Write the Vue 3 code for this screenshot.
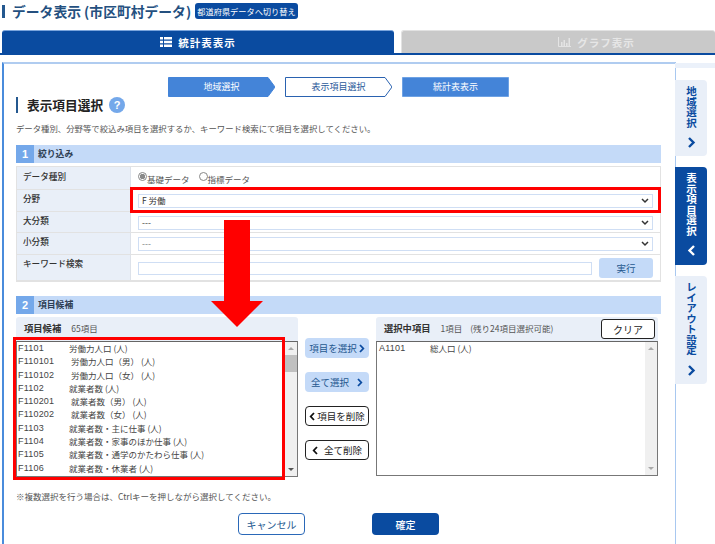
<script setup>
const candidates = [
  { code: 'F1101', name: '労働力人口 (人)' },
  { code: 'F110101', name: '労働力人口（男） (人)', sub: true },
  { code: 'F110102', name: '労働力人口（女） (人)', sub: true },
  { code: 'F1102', name: '就業者数 (人)' },
  { code: 'F110201', name: '就業者数（男） (人)', sub: true },
  { code: 'F110202', name: '就業者数（女） (人)', sub: true },
  { code: 'F1103', name: '就業者数・主に仕事 (人)' },
  { code: 'F1104', name: '就業者数・家事のほか仕事 (人)' },
  { code: 'F1105', name: '就業者数・通学のかたわら仕事 (人)' },
  { code: 'F1106', name: '就業者数・休業者 (人)' }
]
const filters = [
  { label: '分野', value: 'F 労働', rowClass: 'row-b', dim: false },
  { label: '大分類', value: '---', rowClass: 'row-c', dim: false },
  { label: '小分類', value: '---', rowClass: 'row-d', dim: true }
]
const railTabs = [
  { label: '地域選択', cls: 'tab-a', dir: 'right' },
  { label: '表示項目選択', cls: 'tab-b active', dir: 'left' },
  { label: 'レイアウト設定', cls: 'tab-c', dir: 'right' }
]
const steps = [
  { label: '地域選択', points: '0.5,0.5 100,0.5 107,10 100,19.5 0.5,19.5', fill: '#4484d8', stroke: '#4484d8', cls: 'on' },
  { label: '表示項目選択', points: '0.5,0.5 100,0.5 107,10 100,19.5 0.5,19.5', fill: '#fff', stroke: '#2a62b0', cls: 'off' },
  { label: '統計表表示', points: '0.5,0.5 106.5,0.5 106.5,19.5 0.5,19.5', fill: '#4484d8', stroke: '#6ea2e4', cls: 'on' }
]
</script>

<template>
  <div class="page">
    <header class="top">
      <span class="top-bar"></span>
      <h1 class="top-title">データ表示 (市区町村データ)</h1>
      <button class="switch">都道府県データへ切り替え</button>
    </header>

    <nav class="tabs">
      <div class="tab tab-on">
        <svg width="12" height="10" viewBox="0 0 12 10"><path fill="#fff" d="M0 0h3v2.600H0zM4 0h8v2.600H4zM0 3.700h3v2.600H0zM4 3.700h8v2.600H4zM0 7.400h3V10H0zM4 7.400h8V10H4z"/></svg>
        <span>統計表表示</span>
      </div>
      <div class="tab tab-off">
        <svg width="13" height="10" viewBox="0 0 13 10"><path fill="none" stroke="#e4e4e4" d="M.5 0v9.500H13"/><path fill="#e4e4e4" d="M3 5h1.500v4H3zM5.500 3h1.500v6H5.500zM8 6h1.500v3H8zM10.500 1H12v8h-1.500z"/></svg>
        <span>グラフ表示</span>
      </div>
    </nav>

    <div class="main">
      <main class="content">
        <div class="steps">
          <div v-for="s in steps" :key="s.label" class="step" :class="s.cls">
            <svg width="107" height="20" viewBox="0 0 107 20"><polygon :points="s.points" :fill="s.fill" :stroke="s.stroke"/></svg>
            <span>{{ s.label }}</span>
          </div>
        </div>

        <h2 class="heading">
          <span class="heading-text">表示項目選択</span>
          <span class="help">?</span>
        </h2>
        <p class="desc">データ種別、分野等で絞込み項目を選択するか、キーワード検索にて項目を選択してください。</p>

        <div class="sec-head"><b class="num">1</b><span class="sec-title">絞り込み</span></div>
        <div class="table">
          <div class="row row-a">
            <div class="lab">データ種別</div>
            <div class="val radios">
              <span class="radio checked"></span><span class="radio-text">基礎データ</span>
              <span class="radio second"></span><span class="radio-text">指標データ</span>
            </div>
          </div>
          <div v-for="f in filters" :key="f.label" class="row" :class="f.rowClass">
            <div class="lab">{{ f.label }}</div>
            <div class="val sel-cell">
              <div class="select" :class="{ dim: f.dim }">
                <span>{{ f.value }}</span>
                <svg width="8" height="6" viewBox="0 0 8 6"><path fill="none" stroke="#333" stroke-width="1.500" d="M1 1l3 3 3-3"/></svg>
              </div>
            </div>
          </div>
          <div class="row row-e">
            <div class="lab">キーワード検索</div>
            <div class="val kw">
              <div class="input"></div>
              <button class="run">実行</button>
            </div>
          </div>
        </div>

        <div class="sec-head second-sec"><b class="num">2</b><span class="sec-title">項目候補</span></div>

        <div class="picker">
          <section class="panel">
            <div class="panel-head">
              <b>項目候補</b><span class="count">65項目</span>
            </div>
            <div class="list">
              <div class="list-body">
                <div v-for="c in candidates" :key="c.code" class="item">
                  <span class="code" :class="{ wide: c.sub }">{{ c.code }}</span><span>{{ c.name }}</span>
                </div>
              </div>
              <div class="scroll">
                <i class="up"></i><i class="thumb"></i><i class="down"></i>
              </div>
            </div>
          </section>

          <div class="moves">
            <button class="move blue">項目を選択<svg width="6" height="9" viewBox="0 0 6 9"><path fill="none" stroke="#0a4ba0" stroke-width="1.800" d="M1 1l3.300 3.500L1 8"/></svg></button>
            <button class="move blue all">全て選択<svg width="6" height="9" viewBox="0 0 6 9"><path fill="none" stroke="#0a4ba0" stroke-width="1.800" d="M1 1l3.300 3.500L1 8"/></svg></button>
            <button class="move plain"><svg width="6" height="9" viewBox="0 0 6 9"><path fill="none" stroke="#111" stroke-width="1.800" d="M5 1L1.700 4.500 5 8"/></svg>項目を削除</button>
            <button class="move plain all"><svg width="6" height="9" viewBox="0 0 6 9"><path fill="none" stroke="#111" stroke-width="1.800" d="M5 1L1.700 4.500 5 8"/></svg>全て削除</button>
          </div>

          <section class="panel">
            <div class="panel-head">
              <b>選択中項目</b><span class="count">1項目</span><span class="count remain">(残り24項目選択可能)</span>
              <button class="clear">クリア</button>
            </div>
            <div class="list short">
              <div class="list-body">
                <div class="item"><span class="code sel">A1101</span><span>総人口 (人)</span></div>
              </div>
              <div class="scroll">
                <i class="up"></i><i class="fill"></i><i class="down"></i>
              </div>
            </div>
          </section>
        </div>

        <p class="note">※複数選択を行う場合は、Ctrlキーを押しながら選択してください。</p>
        <div class="actions">
          <button class="cancel">キャンセル</button>
          <button class="ok">確定</button>
        </div>
      </main>

      <aside class="rail">
        <div class="rail-strip"></div>
        <div v-for="t in railTabs" :key="t.label" class="rail-tab" :class="t.cls">
          <span class="rail-text">{{ t.label }}</span>
          <svg width="9" height="11" viewBox="0 0 9 11">
            <path v-if="t.dir === 'right'" fill="none" stroke="#0a4ba0" stroke-width="2.400" d="M2 1l4.500 4.500L2 10"/>
            <path v-else fill="none" stroke="#fff" stroke-width="2.400" d="M7 1L2.500 5.500 7 10"/>
          </svg>
        </div>
      </aside>
    </div>

    <div class="mark mark-field"></div>
    <div class="mark mark-list"></div>
    <svg class="arrow" width="52" height="107" viewBox="0 0 52 107"><polygon fill="#f00" points="13,0 39,0 39,81 52,81 26,107 0,81 13,81"/></svg>
  </div>
</template>

<style>
html, body { margin: 0; background: #fff; }
</style>

<style scoped>
.page {
  position: relative;
  width: 715px;
  height: 544px;
  overflow: hidden;
  background: #fff;
  font-family: "Noto Sans CJK JP", "Noto Sans", sans-serif;
  color: #333;
  font-size: 9px;
}
button { font-family: inherit; padding: 0; cursor: pointer; }
h1, h2, p { margin: 0; }

.top { display: flex; align-items: center; height: 16px; padding: 3px 0 11px 2px; }
.top-bar { width: 3px; height: 13px; background: #24588f; margin-right: 7px; flex: none; }
.top-title { font-size: 13.800px; font-weight: 700; color: #24507f; line-height: 16px; white-space: nowrap; width: 183px; flex: none; }
.switch { margin-left: 0; width: 103px; height: 16px; border: 0; border-radius: 3px; background: #0a4ba0; color: #fff; font-size: 8.200px; line-height: 16px; white-space: nowrap; flex: none; }

.tabs { display: flex; gap: 7px; height: 23px; padding-left: 2px; border-bottom: 2px solid #0a4ba0; margin-bottom: 7px; }
.tab { display: flex; align-items: center; justify-content: center; gap: 6px; font-size: 10.500px; letter-spacing: 1px; font-weight: 700; border-radius: 3px 3px 0 0; box-sizing: border-box; height: 23px; }
.tab-on { width: 392px; background: #0a4ba0; color: #fff; border-top: 1px solid #7aa4dc; }
.tab-off { flex: 1; padding-left: 76px; background: #c9c9c9; color: #e6e6e6; border-top: 1px solid #e2e2e2; border-left: 1px solid #e2e2e2; }

.main { display: flex; height: 482px; margin-left: 2px; }
.content { width: 659px; border-left: 2px solid #4a8cdc; border-top: 2px solid #b0ccf0; padding: 13px 0 0 12px; flex: none; box-sizing: content-box; height: 467px; }

.steps { display: flex; padding-left: 152px; gap: 10px; height: 20px; }
.step { display: grid; width: 107px; height: 20px; }
.step > * { grid-area: 1 / 1; }
.step span { justify-self: center; align-self: center; font-size: 9px; line-height: 20px; }
.step.on span { color: #fff; }
.step.off span { color: #2a5a9a; }

.heading { display: flex; align-items: center; height: 16px; border-left: 2px solid #24588f; padding-left: 9px; }
.heading-text { font-size: 12.700px; font-weight: 700; color: #222; line-height: 16px; }
.help { display: flex; align-items: center; justify-content: center; width: 16px; height: 16px; margin-left: 6px; border-radius: 50%; background: #74a8ea; color: #fff; font-size: 11px; font-weight: 700; font-family: "Liberation Sans", sans-serif; }
.desc { margin-top: 9px; height: 12px; line-height: 12px; font-size: 8.400px; color: #555; white-space: nowrap; }

.sec-head { display: flex; align-items: center; width: 645px; height: 18px; margin-top: 11px; background: #c4daf8; font-size: 8.800px; font-weight: 700; color: #2e3e52; }
.sec-title { padding-bottom: 2px; }
.num { width: 18px; height: 18px; line-height: 18px; margin-right: 4px; text-align: center; background: #74a8ea; color: #fff; font-family: "Liberation Sans", sans-serif; font-size: 11px; }
.second-sec { margin-top: 14px; }

.table { width: 645px; margin-top: 3px; border: solid #e2e2e2; border-width: 1px 1px 2px; box-sizing: border-box; height: 116px; }
.row { display: flex; border-bottom: 1px solid #e2e2e2; box-sizing: border-box; }
.row-a { height: 23px; }
.row-b { height: 22px; }
.row-c { height: 21px; }
.row-d { height: 22px; }
.row-e { height: 25px; border-bottom: 0; }
.lab { width: 114px; flex: none; box-sizing: border-box; padding: 1px 0 0 6px; background: #e9eff8; border-right: 1px solid #dde2ea; font-size: 8.600px; font-weight: 500; color: #333; line-height: 14px; }
.row-a .lab { padding-top: 2px; }
.val { flex: 1; display: flex; align-items: center; padding: 0 7px; min-width: 0; }
.sel-cell { padding-top: 0; }
.radios { padding-top: 1px; font-size: 8.500px; color: #555; }
.radio { width: 9px; height: 9px; margin-top: -4px; border: 1px solid #888; border-radius: 50%; box-sizing: border-box; flex: none; background: #fff; }
.radio.checked { background: radial-gradient(circle, #8a8a8a 0 2.500px, #fff 3px); }
.radio.second { margin-left: 9px; }
.select { display: flex; align-items: center; justify-content: space-between; box-sizing: border-box; width: 515px; height: 14px; margin-top: 1px; padding: 0 3px; border: 1px solid #cfdef4; font-size: 8.500px; color: #333; line-height: 11px; }
.select span { margin-top: -1px; }
.select.dim { color: #777; }
.kw { align-items: flex-start; padding-top: 3px; }
.input { width: 455px; height: 13px; margin-top: 4px; border: 1px solid #cfdef4; box-sizing: border-box; }
.run { margin-left: 7px; width: 54px; height: 20px; border: 0; border-radius: 3px; background: #c4daf8; color: #24588f; font-size: 9.500px; }

.picker { display: flex; gap: 7px; margin-top: 3px; height: 160px; }
.panel { width: 282px; flex: none; }
.panel-head { display: flex; align-items: center; height: 24px; padding: 0 0 2px 8px; box-sizing: border-box; background: #e9eff8; border-radius: 3px 3px 0 0; }
.panel-head b { font-size: 9.300px; font-weight: 700; color: #333; }
.count { margin-left: 10px; font-size: 8.500px; color: #555; }
.remain { margin-left: 8px; }
.clear { margin: 2px 3px 0 auto; width: 54px; height: 20px; background: #fff; border: 1px solid #222; border-radius: 3px; font-size: 10px; color: #222; }
.list { display: flex; height: 136px; box-sizing: border-box; border: 1px solid #777; border-top-color: #666; background: #fff; }
.list.short { height: 135px; }
.list-body { flex: 1; padding: 0 0 0 1px; min-width: 0; }
.list.short .list-body { padding-left: 2px; }
.item { display: flex; height: 13.300px; line-height: 13.300px; font-size: 8.500px; color: #444; white-space: nowrap; }
.code { width: 51px; flex: none; font-size: 9px; letter-spacing: 0.2px; font-family: "Liberation Sans", sans-serif; }
.code.wide { width: 53px; }
.scroll { width: 12px; flex: none; display: flex; flex-direction: column; background: #f0f0f0; }
.scroll i { display: block; }
.up, .down { height: 13px; position: relative; }
.up::after { content: ""; position: absolute; left: 3px; top: 5px; border: 3px solid transparent; border-top: 0; border-bottom: 3px solid #a8a8a8; }
.down::after { content: ""; position: absolute; left: 3px; top: 5px; border: 3px solid transparent; border-bottom: 0; border-top: 3px solid #555; }
.thumb { height: 17px; background: #c0c0c0; margin-bottom: auto; }
.fill { flex: 1; }
.list.short .down::after { border-top-color: #a8a8a8; }

.moves { width: 64px; flex: none; display: flex; flex-direction: column; gap: 14px; padding-top: 21px; box-sizing: border-box; }
.move { display: flex; align-items: center; justify-content: center; gap: 2px; height: 20px; width: 64px; border-radius: 4px; font-size: 9.500px; box-sizing: border-box; white-space: nowrap; }
.move.blue { border: 0; background: #c4daf8; color: #24588f; }
.move.blue.all { gap: 8px; }
.move.plain { background: #fff; border: 1px solid #222; color: #222; }
.move.plain.all { gap: 6px; }

.note { margin-top: 13px; height: 12px; line-height: 12px; font-size: 8.500px; color: #555; white-space: nowrap; }
.actions { display: flex; gap: 67px; margin-top: 11px; padding-left: 222px; }
.cancel, .ok { width: 67px; height: 22px; border-radius: 4px; font-size: 10px; box-sizing: border-box; }
.cancel { background: #fff; border: 1px solid #2a68b8; color: #24588f; }
.ok { background: #0a4ba0; border: 0; color: #fff; font-weight: 500; }

.rail { width: 40px; flex: none; padding-top: 18px; box-sizing: border-box; border-left: 1px solid #a8c8f0; display: flex; flex-direction: column; gap: 11px; align-items: flex-start; }
.rail-strip { height: 5px; margin: -17px 0 0 -1px; width: 41px; background: #ebf1fa; }
.rail-tab { width: 32px; margin-left: -1px; border-radius: 0 4px 4px 0; background: #e9eff8; color: #0a4ba0; display: flex; flex-direction: column; align-items: center; box-sizing: border-box; padding-top: 6px; gap: 9px; font-size: 10.500px; font-weight: 700; }
.rail-tab.active { background: #0a4ba0; color: #fff; }
.rail-text { writing-mode: vertical-rl; text-orientation: upright; line-height: 12px; letter-spacing: 0; white-space: nowrap; }
.tab-a { height: 76px; margin-top: 1px; }
.tab-b { height: 98px; }
.tab-c { height: 108px; }

.mark { position: absolute; box-sizing: border-box; border: 3px solid #f00; }
.mark-field { left: 130px; top: 187px; width: 531px; height: 26px; }
.mark-list { left: 13px; top: 337px; width: 272px; height: 143px; }
.arrow { position: absolute; left: 211px; top: 220px; }
</style>
